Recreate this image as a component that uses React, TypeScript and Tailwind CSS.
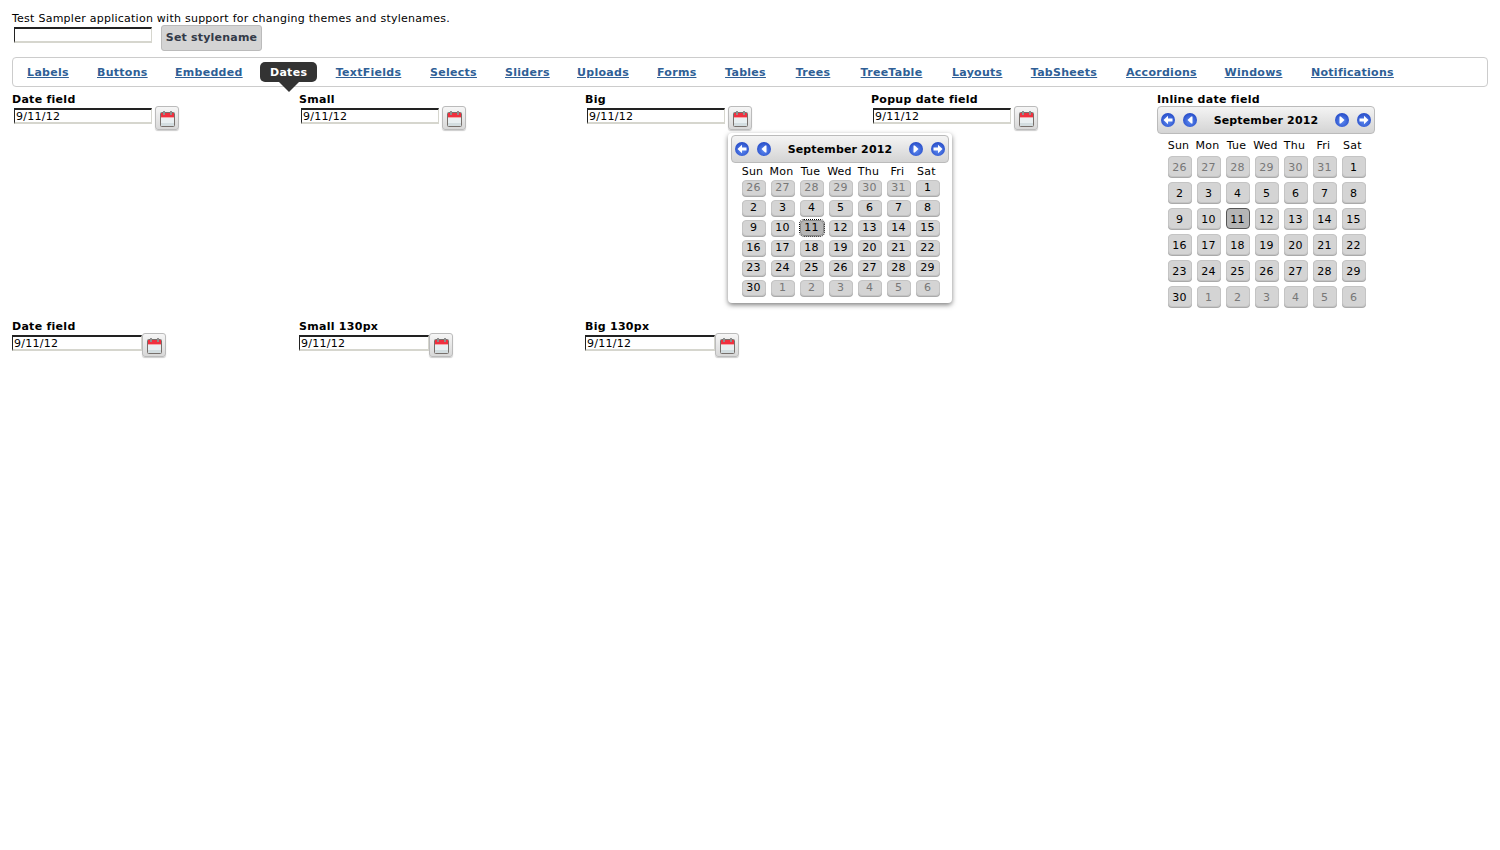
import { useId } from "react";

// text widths are fixed per tab, the hinted text in the picture doesn't scale evenly
const TABS = [
  { label: "Labels", width: "w-[42px]" },
  { label: "Buttons", width: "w-[50px]" },
  { label: "Embedded", width: "w-[67px]" },
  { label: "Dates", width: "w-[37px]" },
  { label: "TextFields", width: "w-[67px]" },
  { label: "Selects", width: "w-[47px]" },
  { label: "Sliders", width: "w-[44px]" },
  { label: "Uploads", width: "w-[52px]" },
  { label: "Forms", width: "w-[39px]" },
  { label: "Tables", width: "w-[43px]" },
  { label: "Trees", width: "w-[36px]" },
  { label: "TreeTable", width: "w-[65px]" },
  { label: "Layouts", width: "w-[50px]" },
  { label: "TabSheets", width: "w-[68px]" },
  { label: "Accordions", width: "w-[70px]" },
  { label: "Windows", width: "w-[59px]" },
  { label: "Notifications", width: "w-[82px]" },
];

const WEEKDAYS = ["Sun", "Mon", "Tue", "Wed", "Thu", "Fri", "Sat"];

const DAYS = [
  26, 27, 28, 29, 30, 31, 1, 2, 3, 4, 5, 6, 7, 8, 9, 10, 11, 12, 13, 14, 15, 16, 17, 18, 19, 20, 21, 22, 23, 24, 25, 26,
  27, 28, 29, 30, 1, 2, 3, 4, 5, 6,
];

function CalendarIcon() {
  return (
    <svg width="15" height="16" viewBox="0 0 15 16">
      <rect x="0.5" y="1.5" width="14" height="14" rx="1" fill="#e9eff1" stroke="#77706c" />
      <rect x="1" y="2" width="13" height="4" fill="#f0303f" />
      <rect x="1" y="6" width="13" height="1" fill="#f6a5a8" />
      <rect x="3" y="0" width="2" height="4" fill="#8d8d8d" />
      <rect x="10" y="0" width="2" height="4" fill="#8d8d8d" />
      <rect x="1" y="12" width="13" height="3" fill="#d3dde0" />
    </svg>
  );
}

function DateField({ label, narrow }: { label: string; narrow?: boolean }) {
  return (
    <div>
      <div className="h-[13px] text-[11px] leading-[13px] font-bold tracking-[0.28px] text-black">{label}</div>
      <div className={narrow ? "flex items-start" : "flex items-start pl-[2px]"}>
        <div
          className={`mt-[2px] h-4 border-t-2 border-l border-r border-b-2 border-t-[#222] border-l-[#222] border-r-[#d6d6ce] border-b-[#d6d6ce] bg-white pl-px text-[11px] leading-[14px] tracking-[0.25px] text-black ${
            narrow ? "w-[130px]" : "w-[138px]"
          }`}
        >
          9/11/12
        </div>
        <button
          type="button"
          className={`flex h-6 w-6 items-start justify-start rounded-[3px] border border-[#bbb] bg-gradient-to-b from-[#f6f6f6] to-[#d8d8d8] pt-1 pl-1 shadow-[0_1px_1px_#ccc] ${
            narrow ? "" : "ml-[3px]"
          }`}
        >
          <CalendarIcon />
        </button>
      </div>
    </div>
  );
}

function NavIcon({ kind }: { kind: "prevYear" | "prevMonth" | "nextMonth" | "nextYear" }) {
  const id = useId();
  const flip = kind === "nextMonth" || kind === "nextYear";
  const isYear = kind === "prevYear" || kind === "nextYear";
  return (
    <svg width="14" height="14" viewBox="0 0 14 14">
      <defs>
        <radialGradient id={id} cx="50%" cy="60%" r="65%">
          <stop offset="0%" stopColor="#5f8cf2" />
          <stop offset="100%" stopColor="#2146c4" />
        </radialGradient>
      </defs>
      <circle cx="7" cy="7" r="7" fill={`url(#${id})`} />
      <g transform={flip ? "matrix(-1 0 0 1 14 0)" : undefined}>
        {isYear ? (
          <path d="M2.5 7 L7 2.8 V5.6 H11.5 V8.4 H7 V11.2 Z" fill="#fff" />
        ) : (
          <path d="M4.5 7 L8.2 3.4 H9.5 V10.6 H8.2 Z" fill="#fff" />
        )}
      </g>
    </svg>
  );
}

function Calendar({ inline }: { inline?: boolean }) {
  return (
    <div className="w-[218px]">
      <div className="flex h-7 items-center rounded-[4px] border border-[#bbb] bg-gradient-to-b from-[#f4f4f4] to-[#d4d4d4] px-[3px]">
        <div className="flex w-9 justify-between">
          <NavIcon kind="prevYear" />
          <NavIcon kind="prevMonth" />
        </div>
        <div className="flex-1 pt-[2px] text-center text-[11px] font-bold tracking-[0.14px] text-black">September 2012</div>
        <div className="flex w-9 justify-between">
          <NavIcon kind="nextMonth" />
          <NavIcon kind="nextYear" />
        </div>
      </div>
      <div className={inline ? "mt-[3px] grid grid-cols-[repeat(7,29px)] pl-2" : "grid grid-cols-[repeat(7,29px)] pl-2"}>
        {WEEKDAYS.map((day) => (
          <div key={day} className="h-[17px] pr-[2px] text-center text-[11px] leading-[17px] tracking-[0.25px] text-black">
            {day}
          </div>
        ))}
        {DAYS.map((day, i) => {
          const other = i < 6 || i >= 36;
          const today = i === 16;
          return (
            <div key={i} className={inline ? "flex h-[26px] items-start justify-center pt-[2px]" : "flex h-5 items-start justify-center"}>
              <div
                className={`w-6 rounded-[4px] border text-center text-[11px] tracking-[0.25px] ${
                  inline ? "h-[21px] leading-[21px]" : "h-4 leading-[13px]"
                } ${other ? "text-[#777]" : "text-black"} ${
                  today
                    ? inline
                      ? "border-[#555] bg-[#b5b5b5]"
                      : "border-[#888] bg-[#b5b5b5] outline outline-1 outline-dotted outline-black"
                    : "border-[#c4c4c4] bg-[#d4d4d4] shadow-[0_1px_0_#aaa]"
                }`}
              >
                {day}
              </div>
            </div>
          );
        })}
      </div>
    </div>
  );
}

export default function App() {
  return (
    <div className="min-h-[850px] bg-white px-3 pt-3 font-['DejaVu_Sans',sans-serif] text-[11px] text-black">
      <div className="h-[13px] leading-[13px] tracking-[0.25px]">
        Test Sampler application with support for changing themes and stylenames.
      </div>
      <div className="flex items-start pl-[2px]">
        <div className="mt-[2px] h-4 w-[138px] border-t-2 border-l border-r border-b-2 border-t-[#222] border-l-[#222] border-r-[#d6d6ce] border-b-[#d6d6ce] bg-white" />
        <button
          type="button"
          className="ml-[9px] h-[26px] w-[101px] rounded-[3px] border border-[#bbb] bg-[#d4d4d4] text-[11px] font-bold tracking-[0.2px] text-[#333a48]"
        >
          Set stylename
        </button>
      </div>
      <nav className="mt-[6px] flex h-[30px] items-center gap-2 rounded-[4px] border border-[#ccc] px-1">
        {TABS.map((tab) =>
          tab.label === "Dates" ? (
            <span
              key={tab.label}
              className="relative h-5 rounded-[5px] bg-[#333] px-[10px] text-[11px] leading-[22px] font-bold tracking-[0.28px] text-white"
            >
              <span className={`block whitespace-nowrap text-center ${tab.width}`}>{tab.label}</span>
              <span className="absolute top-full left-1/2 -ml-[10px] border-x-[10px] border-t-[10px] border-x-transparent border-t-[#333]" />
            </span>
          ) : (
            <div key={tab.label} className="h-5 px-[10px]">
              <a
                href="#"
                className={`block whitespace-nowrap text-center text-[11px] leading-[22px] font-bold tracking-[0.28px] text-[#2f5f96] underline ${tab.width}`}
              >
                {tab.label}
              </a>
            </div>
          ),
        )}
      </nav>
      <div className="mt-[6px] grid h-[227px] grid-cols-[287px_286px_286px_286px_331px]">
        <DateField label="Date field" />
        <DateField label="Small" />
        <div className="relative">
          <DateField label="Big" />
          <div className="absolute top-[40px] left-[143px] z-10 w-[224px] rounded-[4px] bg-white px-[3px] pt-[2px] pb-[3px] shadow-[0_2px_5px_rgba(0,0,0,0.5)]">
            <Calendar />
          </div>
        </div>
        <DateField label="Popup date field" />
        <div>
          <div className="h-[13px] text-[11px] leading-[13px] font-bold tracking-[0.28px] text-black">Inline date field</div>
          <Calendar inline />
        </div>
      </div>
      <div className="grid grid-cols-[287px_286px_286px_286px_331px]">
        <DateField label="Date field" narrow />
        <DateField label="Small 130px" narrow />
        <DateField label="Big 130px" narrow />
      </div>
    </div>
  );
}
